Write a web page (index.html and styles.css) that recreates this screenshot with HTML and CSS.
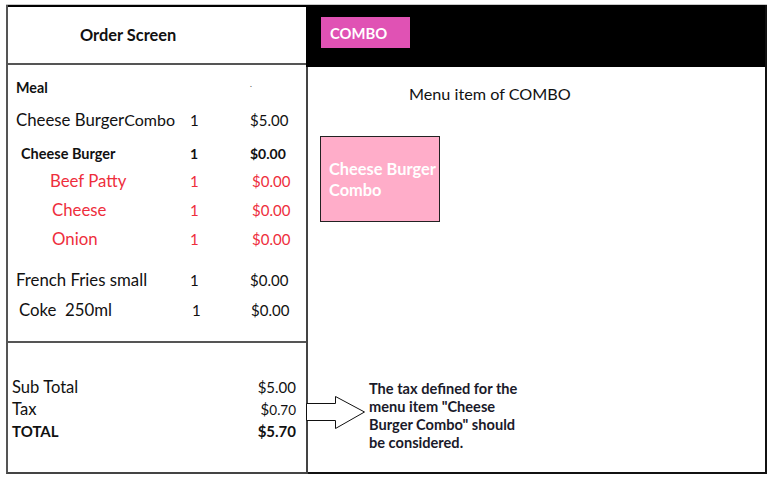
FILE: index.html
```html
<!DOCTYPE html>
<html>
<head>
<meta charset="utf-8">
<link rel="stylesheet" href="styles.css">
</head>
<body>
<div class="screen">
  <section class="order">
    <header class="order-head">Order Screen</header>
    <div class="order-list">
      <div class="row meal"><span class="name">Meal</span><span class="qty"></span><span class="price dot">.</span></div>
      <div class="row combo"><span class="name">Cheese Burger<span class="tight">Combo</span></span><span class="qty">1</span><span class="price">$5.00</span></div>
      <div class="row sub"><span class="name">Cheese Burger</span><span class="qty">1</span><span class="price">$0.00</span></div>
      <div class="row part first"><span class="name">Beef Patty</span><span class="qty">1</span><span class="price">$0.00</span></div>
      <div class="row part"><span class="name">Cheese</span><span class="qty">1</span><span class="price">$0.00</span></div>
      <div class="row part"><span class="name">Onion</span><span class="qty">1</span><span class="price">$0.00</span></div>
      <div class="row side"><span class="name">French Fries small</span><span class="qty">1</span><span class="price">$0.00</span></div>
      <div class="row drink"><span class="name">Coke&nbsp; 250ml</span><span class="qty">1</span><span class="price">$0.00</span></div>
    </div>
    <div class="totals">
      <div class="total-row"><span>Sub Total</span><span class="amt">$5.00</span></div>
      <div class="total-row"><span>Tax</span><span class="amt">$<small>0.70</small></span></div>
      <div class="total-row grand"><span>TOTAL</span><span class="amt">$5.70</span></div>
    </div>
  </section>
  <section class="menu">
    <header class="menu-head"><span class="tab">COMBO</span></header>
    <div class="menu-body">
      <p class="menu-title">Menu item of COMBO</p>
      <div class="item-card">Cheese Burger<br>Combo</div>
      <div class="note">
        <svg class="arrow" width="60" height="36" viewBox="0 0 60 36">
          <path d="M0.5 7.5 H29.5 V0.5 L58.5 16 L29.5 32.5 V24.5 H0.5 Z" fill="#fff" stroke="#111" stroke-width="1"/>
        </svg>
        <p class="note-text">The tax defined for the<br>menu item "Cheese<br>Burger Combo" should<br>be considered.</p>
      </div>
    </div>
  </section>
</div>
</body>
</html>
```
FILE: styles.css
```css
html, body {
  margin: 0;
  padding: 0;
  background: #fff;
}
body {
  font-family: Lato, "Open Sans", sans-serif;
  color: #111;
}
.screen {
  display: flex;
  margin: 4px 0 0 6px;
  width: 761px;
  height: 469px;
  border-top: 1px solid #c8c8c8;
}
.order {
  width: 298px;
  display: flex;
  flex-direction: column;
  border-left: 2px solid #555;
  border-right: 2px solid #444;
  border-bottom: 2px solid #444;
}
.order-head {
  height: 56px;
  box-sizing: content-box;
  border-top: 2px solid #000;
  border-bottom: 2px solid #555;
  display: flex;
  align-items: center;
  padding-left: 72px;
  padding-bottom: 0;
  font-weight: 700;
  font-size: 16.4px;
  line-height: 16px;
}
.order-head::after { content: ""; }
.order-list {
  height: 278px;
  padding-top: 13px;
  box-sizing: border-box;
  border-bottom: 2px solid #555;
}
.row {
  display: grid;
  grid-template-columns: 174px 60px 1fr;
  height: 20px;
  line-height: 20px;
  font-size: 16.8px;
  padding-left: 8px;
}
.row .qty, .row .price { font-size: 15px; }
.meal { font-weight: 700; font-size: 14.3px; }
.dot { font-size: 8px !important; color: #666; line-height: 12px; }
.combo { margin-top: 12px; }
.combo .tight { font-size: 16px; }
.sub { margin-top: 14px; font-weight: 700; font-size: 14.5px; padding-left: 13px; grid-template-columns: 169px 60px 1fr; }
.sub .qty, .sub .price { font-size: 14px; }
.part { color: #ee2e3c; margin-top: 9px; padding-left: 44px; grid-template-columns: 138px 60px 1fr; }
.part.first { margin-top: 7px; padding-left: 42px; grid-template-columns: 140px 60px 1fr; }
.part .price { padding-left: 2px; }
.side { margin-top: 21px; }
.drink { margin-top: 10px; padding-left: 11px; grid-template-columns: 173px 59px 1fr; }
.totals {
  flex: 1;
  padding: 33px 10px 0 4px;
}
.total-row {
  display: flex;
  justify-content: space-between;
  align-items: baseline;
  height: 22px;
  line-height: 22px;
  font-size: 16.6px;
}
.total-row .amt { font-size: 15px; }
.total-row small { font-size: 13.5px; }
.grand { font-weight: 700; font-size: 15px; }
.menu {
  flex: 1;
  display: flex;
  flex-direction: column;
  border-right: 2px solid #111;
  border-bottom: 2px solid #111;
}
.menu-head {
  height: 62px;
  background: #000;
  box-sizing: border-box;
  padding: 12px 0 0 15px;
  margin-left: -2px;
}
.tab {
  display: inline-flex;
  align-items: center;
  width: 89px;
  height: 31px;
  box-sizing: border-box;
  padding-left: 9px;
  background: #e052b4;
  color: #fff;
  font-weight: 700;
  font-size: 14.8px;
}
.menu-body {
  flex: 1;
  display: flex;
  flex-direction: column;
  padding-left: 12px;
}
.menu-title {
  margin: 17px 0 0 89px;
  font-size: 16.2px;
  line-height: 20px;
}
.item-card {
  margin-top: 32px;
  width: 120px;
  height: 86px;
  box-sizing: border-box;
  border: 1px solid #222;
  background: #ffadc9;
  color: #fff;
  font-weight: 700;
  font-size: 16.4px;
  line-height: 21px;
  display: flex;
  align-items: center;
  padding-left: 8px;
}
.note {
  margin: 158px 0 0 -14px;
  display: flex;
  align-items: flex-start;
}
.arrow {
  margin-top: 16px;
  flex: none;
}
.note-text {
  margin: 0 0 0 3px;
  font-weight: 700;
  font-size: 14.6px;
  line-height: 18px;
  color: #1a1a2a;
}
```
